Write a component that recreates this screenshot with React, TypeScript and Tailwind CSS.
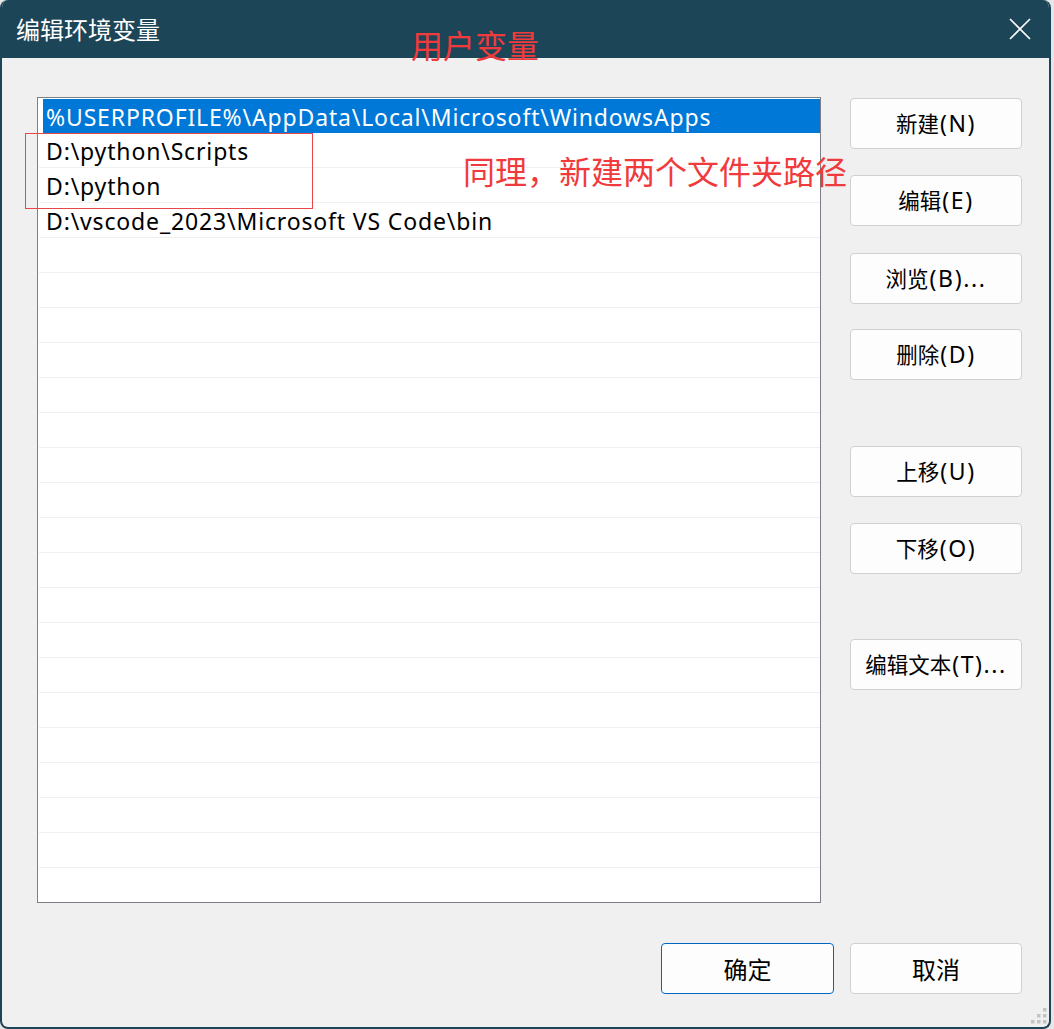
import React from "react";

const rows = [
  "%USERPROFILE%\\AppData\\Local\\Microsoft\\WindowsApps",
  "D:\\python\\Scripts",
  "D:\\python",
  "D:\\vscode_2023\\Microsoft VS Code\\bin",
];

const font = { fontFamily: '"Noto Sans", "Noto Sans CJK SC", sans-serif' };
const cjk = { fontFamily: '"Noto Sans CJK SC", sans-serif' };

function Btn({
  cn,
  lat = "",
  primary = false,
  big = false,
  className = "",
}: {
  cn: string;
  lat?: string;
  primary?: boolean;
  big?: boolean;
  className?: string;
}) {
  return (
    <div
      className={
        "flex h-[51px] w-[172px] shrink-0 items-center justify-center rounded-[4px] border bg-[#fdfdfd] text-black " +
        (primary ? "border-[#0067c0] " : "border-[#d0d0d0] ") +
        className
      }
    >
      <span className={big ? "text-[24px]" : "text-[21.5px]"} style={cjk}>
        {cn}
      </span>
      {lat && <span className="ml-[1px] text-[23px] tracking-[1.6px]">{lat}</span>}
    </div>
  );
}

export default function App() {
  const total = 23;
  return (
    <div className="h-[1029px] w-[1054px] bg-[#e6e6e6]" style={font}>
      <div className="relative flex h-[1029px] w-[1051px] flex-col overflow-hidden rounded-[8px] border-x-2 border-b-2 border-[#1d4558] bg-[#f0f0f0]">
        {/* title bar */}
        <div className="flex h-[58px] shrink-0 items-center justify-between bg-[#1d4558] pl-[14px] pr-[18px]">
          <span className="text-[24px] text-white" style={cjk}>
            编辑环境变量
          </span>
          <svg width="22" height="22" viewBox="0 0 22 22">
            <path d="M1 1 L21 21 M21 1 L1 21" stroke="white" strokeWidth="1.6" fill="none" />
          </svg>
        </div>

        {/* body */}
        <div className="flex flex-1 flex-col pl-[35px] pr-[27px] pt-[39px]">
          <div className="flex gap-[29px]">
            {/* list */}
            <div className="h-[806px] w-[784px] shrink-0 overflow-hidden border border-[#7a7f88] bg-white">
              {Array.from({ length: total }).map((_, i) => {
                const text = rows[i] ?? "";
                const sel = i === 0;
                return (
                  <div key={i} className="relative h-[35px] pl-[1px]">
                    {sel ? (
                      <div className="ml-[4px] mt-[1px] flex h-[34px] items-center bg-[#0078d7] pl-[3px] pt-[2px] text-[23px] leading-none tracking-[0.85px] text-white">
                        {text}
                      </div>
                    ) : (
                      <div className="flex h-[34px] items-center border-b border-[#f0f0f0] pl-[7px] pt-[2px] text-[23px] leading-none tracking-[0.85px] text-black">
                        {text}
                      </div>
                    )}
                  </div>
                );
              })}
            </div>

            {/* side buttons */}
            <div className="flex flex-col pt-[1px]">
              <Btn cn="新建" lat="(N)" />
              <Btn cn="编辑" lat="(E)" className="mt-[26px]" />
              <Btn cn="浏览" lat="(B)..." className="mt-[27px]" />
              <Btn cn="删除" lat="(D)" className="mt-[25px]" />
              <Btn cn="上移" lat="(U)" className="mt-[66px]" />
              <Btn cn="下移" lat="(O)" className="mt-[26px]" />
              <Btn cn="编辑文本" lat="(T)..." className="mt-[65px]" />
            </div>
          </div>

          {/* bottom buttons */}
          <div className="mt-[40px] flex justify-end gap-[16px]">
            <Btn cn="确定" primary big className="w-[173px]" />
            <Btn cn="取消" big />
          </div>
        </div>

        {/* annotations */}
        <div className="absolute left-[409px] top-[28px] text-[32px] leading-none text-[#f03a3c]" style={cjk}>
          用户变量
        </div>
        <div className="absolute left-[461px] top-[154px] text-[32px] leading-none text-[#f03a3c]" style={cjk}>
          同理，新建两个文件夹路径
        </div>
        <div className="absolute left-[23px] top-[133px] h-[76px] w-[288px] border border-[#e8474a]" />

        {/* resize grip */}
        <svg className="absolute bottom-[2px] right-[1px]" width="18" height="18" viewBox="0 0 18 18">
          <g fill="#c4c4c4">
            <rect x="13" y="1" width="3.5" height="3.5" />
            <rect x="7" y="7" width="3.5" height="3.5" />
            <rect x="13" y="7" width="3.5" height="3.5" />
            <rect x="1" y="13" width="3.5" height="3.5" />
            <rect x="7" y="13" width="3.5" height="3.5" />
            <rect x="13" y="13" width="3.5" height="3.5" />
          </g>
        </svg>
      </div>
    </div>
  );
}
